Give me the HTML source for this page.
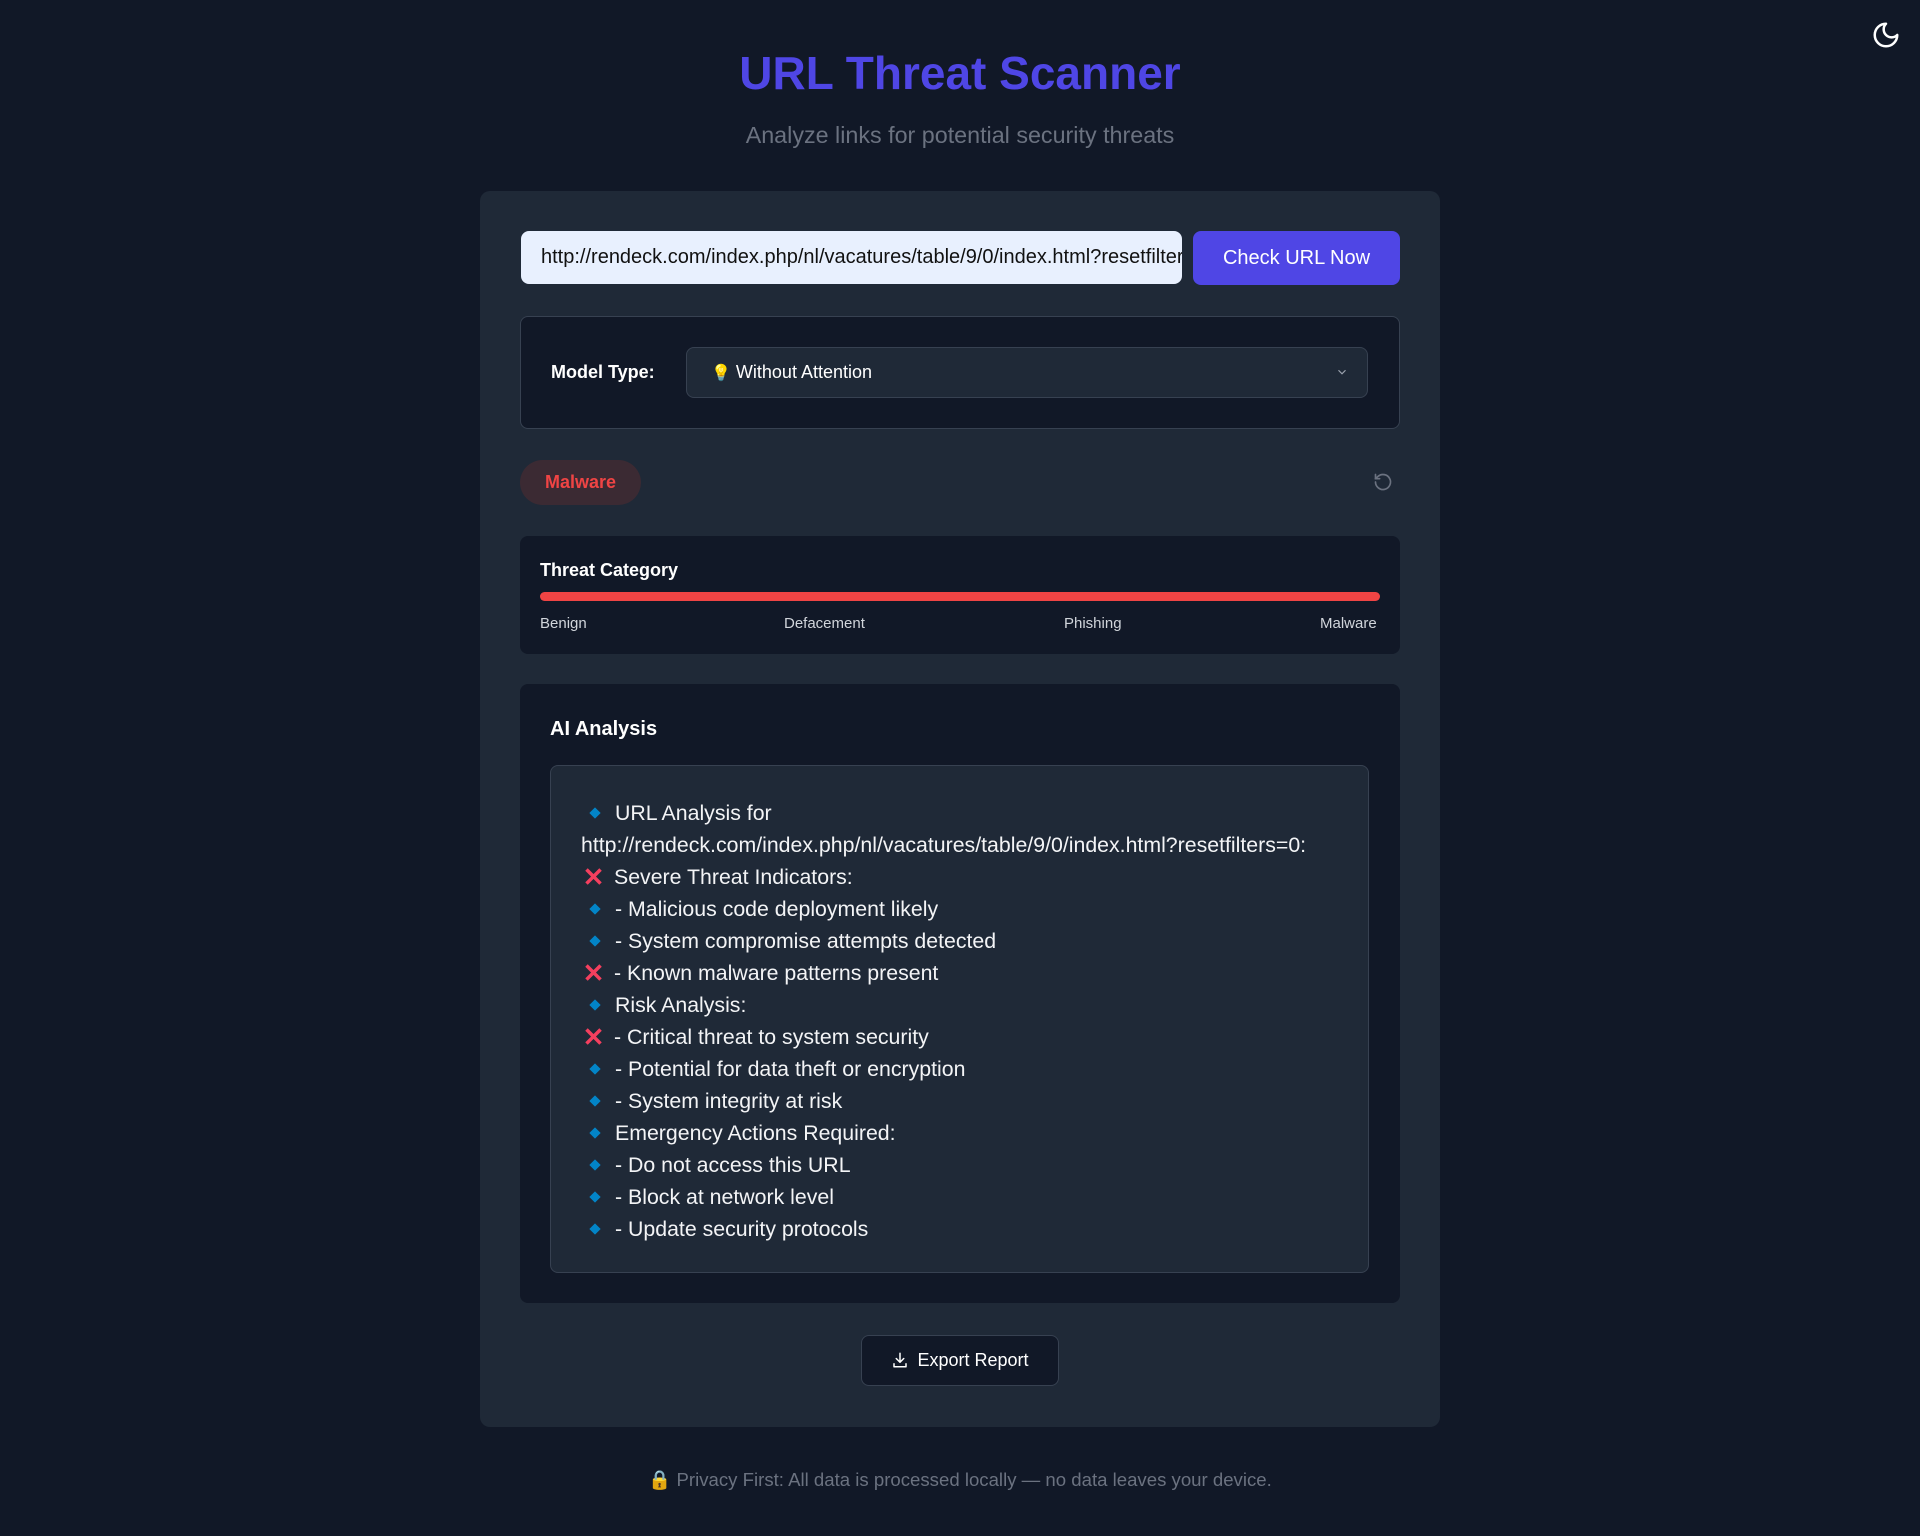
<!DOCTYPE html>
<html><head><meta charset="utf-8"><style>
*{box-sizing:border-box;margin:0;padding:0}
body{width:1920px;height:1536px;background:#111827;font-family:"Liberation Sans",sans-serif;position:relative;overflow:hidden;color:#fff}
.a{position:absolute}
h1{position:absolute;left:0;width:1920px;top:46px;text-align:center;font-size:46px;font-weight:bold;color:#4f46e5}
.sub{left:0;width:1920px;top:122px;text-align:center;font-size:23.3px;color:#6b7280}
.card{left:480px;top:191px;width:960px;height:1236px;background:#1f2937;border-radius:10px}
.inp{left:521px;top:231px;width:661px;height:53px;background:#e8f0fe;border-radius:8px;color:#111;font-size:20px;line-height:53px;padding-left:20px;white-space:nowrap;overflow:hidden}
.btn{left:1193px;top:231px;width:207px;height:54px;background:#4f46e5;border-radius:8px;font-size:20px;line-height:54px;text-align:center}
.mbox{left:520px;top:316px;width:880px;height:113px;background:#111827;border:1px solid #374151;border-radius:8px}
.sel{left:686px;top:347px;width:682px;height:51px;background:#1f2937;border:1px solid #374151;border-radius:8px;font-size:18px;line-height:49px;padding-left:24px}
.badge{left:520px;top:460px;width:121px;height:45px;background:#3b2a33;border-radius:23px;color:#ef4444;font-weight:bold;font-size:18px;line-height:45px;text-align:center}
.tc{left:520px;top:536px;width:880px;height:118px;background:#111827;border-radius:8px}
.ai{left:520px;top:684px;width:880px;height:619px;background:#111827;border-radius:8px}
.inner{left:550px;top:765px;width:819px;height:508px;background:#1f2937;border:1px solid #374151;border-radius:8px;padding:31px 0 0 30px;font-size:21.3px;line-height:32px;color:#f3f4f6}
.l{white-space:nowrap;height:32px}
.d{display:inline-block;width:8px;height:8px;background:#0284c7;transform:rotate(45deg);margin:0 16px 3px 10px}
.x{display:inline-block;width:25px;height:32px;line-height:32px;vertical-align:top;color:#f43f5e;font-weight:bold;font-size:26px;margin-right:8px;text-align:center}
.exp{left:861px;top:1335px;width:198px;height:51px;background:#111827;border:1px solid #374151;border-radius:8px;font-size:18px;line-height:49px;text-align:center}
.foot{left:0;width:1920px;top:1469px;text-align:center;font-size:18.6px;color:#6b7280}
</style></head><body>
<svg class="a" style="left:1871px;top:20px" width="30" height="30" viewBox="0 0 24 24" fill="none" stroke="#fff" stroke-width="2" stroke-linecap="round" stroke-linejoin="round"><path d="M12 3a6 6 0 0 0 9 9 9 9 0 1 1-9-9Z"/></svg>
<h1>URL Threat Scanner</h1>
<div class="a sub">Analyze links for potential security threats</div>
<div class="a card"></div>
<div class="a inp">http://rendeck.com/index.php/nl/vacatures/table/9/0/index.html?resetfilters=0</div>
<div class="a btn">Check URL Now</div>
<div class="a mbox"></div>
<div class="a" style="left:551px;top:362px;font-size:18px;font-weight:bold">Model Type:</div>
<div class="a sel"><span style="font-size:16px">💡</span> Without Attention</div>
<svg class="a" style="left:1335px;top:365px" width="14" height="14" viewBox="0 0 24 24" fill="none" stroke="#9ca3af" stroke-width="2"><path d="M6 9l6 6 6-6"/></svg>
<div class="a badge">Malware</div>
<svg class="a" style="left:1373px;top:472px" width="20" height="20" viewBox="0 0 24 24" fill="none" stroke="#6b7280" stroke-width="2" stroke-linecap="round"><path d="M3 12a9 9 0 1 0 3-6.7L3 8"/><path d="M3 3v5h5"/></svg>
<div class="a tc"></div>
<div class="a" style="left:540px;top:560px;font-size:18px;font-weight:bold">Threat Category</div>
<div class="a" style="left:540px;top:592px;width:840px;height:9px;background:#ef4444;border-radius:5px"></div>
<div class="a" style="left:540px;top:615px;font-size:15px;color:#d1d5db">Benign</div>
<div class="a" style="left:784px;top:615px;font-size:15px;color:#d1d5db">Defacement</div>
<div class="a" style="left:1064px;top:615px;font-size:15px;color:#d1d5db">Phishing</div>
<div class="a" style="left:1320px;top:615px;font-size:15px;color:#d1d5db">Malware</div>
<div class="a ai"></div>
<div class="a" style="left:550px;top:718px;font-size:20px;font-weight:bold">AI Analysis</div>
<div class="a inner">
<div class="l"><span class="d"></span>URL Analysis for</div>
<div class="l">http://rendeck.com/index.php/nl/vacatures/table/9/0/index.html?resetfilters=0:</div>
<div class="l"><span class="x">✕</span>Severe Threat Indicators:</div>
<div class="l"><span class="d"></span>- Malicious code deployment likely</div>
<div class="l"><span class="d"></span>- System compromise attempts detected</div>
<div class="l"><span class="x">✕</span>- Known malware patterns present</div>
<div class="l"><span class="d"></span>Risk Analysis:</div>
<div class="l"><span class="x">✕</span>- Critical threat to system security</div>
<div class="l"><span class="d"></span>- Potential for data theft or encryption</div>
<div class="l"><span class="d"></span>- System integrity at risk</div>
<div class="l"><span class="d"></span>Emergency Actions Required:</div>
<div class="l"><span class="d"></span>- Do not access this URL</div>
<div class="l"><span class="d"></span>- Block at network level</div>
<div class="l"><span class="d"></span>- Update security protocols</div>
</div>
<div class="a exp"><svg style="vertical-align:-3px;margin-right:8px" width="18" height="18" viewBox="0 0 24 24" fill="none" stroke="#fff" stroke-width="2" stroke-linecap="round" stroke-linejoin="round"><path d="M12 3v12M7 10l5 5 5-5M4 17v4h16v-4"/></svg>Export Report</div>
<div class="a foot">🔒 Privacy First: All data is processed locally — no data leaves your device.</div>
</body></html>
